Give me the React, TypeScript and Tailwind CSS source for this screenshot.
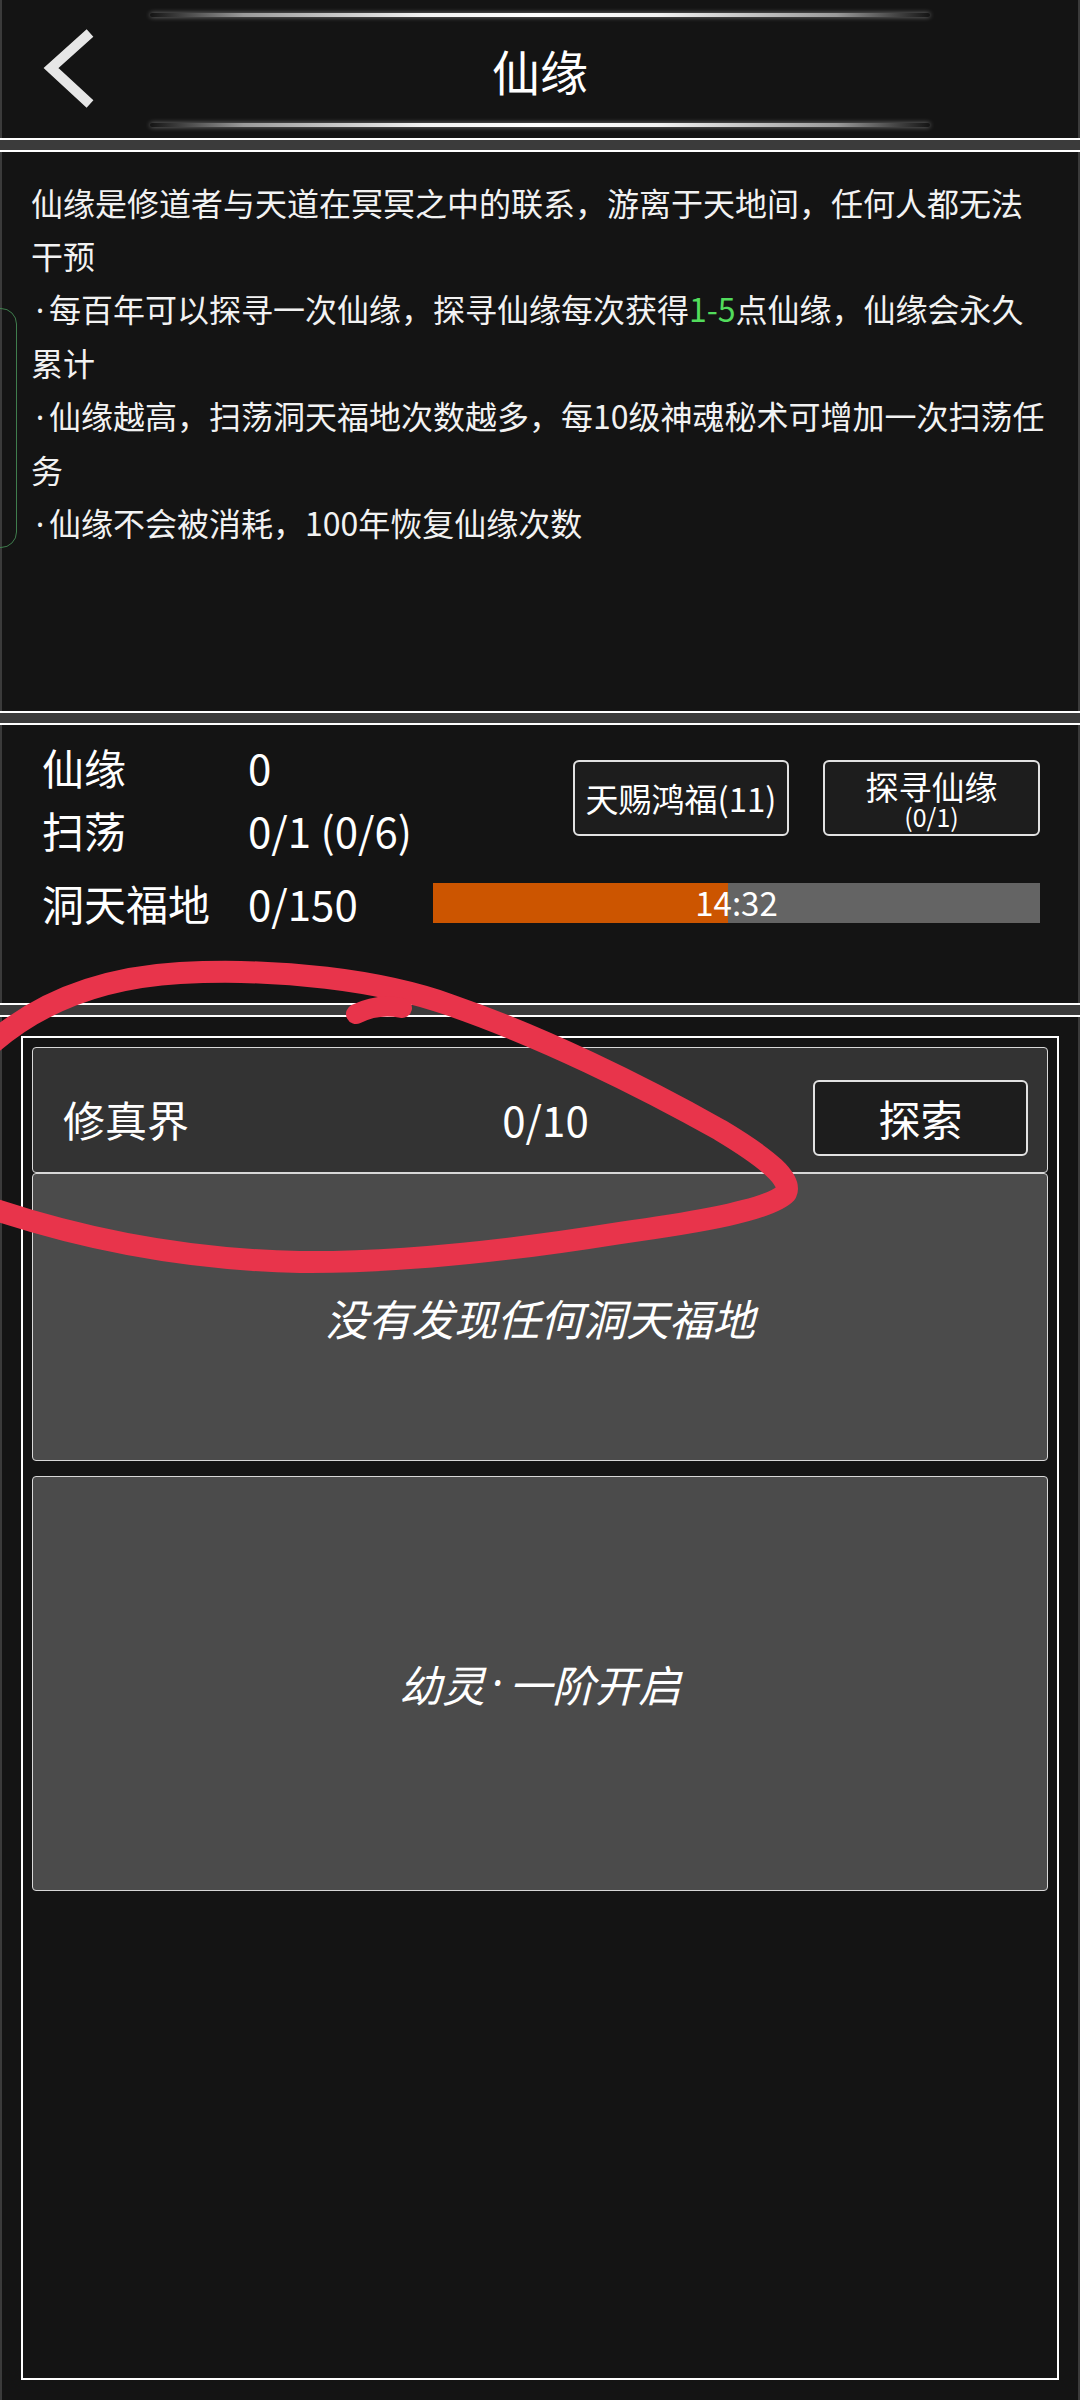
import type { ReactNode } from 'react'

const FONT = "font-['Noto_Sans_CJK_SC','Noto_Sans',sans-serif]"

// the CJK font draws U+00B7 full width; the reference shows a narrow Latin dot
function Dot() {
  return <span className="inline-block w-[0.56em] text-center font-['Noto_Sans',sans-serif]">·</span>
}

function GlowLine() {
  return (
    <div className="mx-auto h-[4px] w-[780px] rounded-full bg-[linear-gradient(90deg,transparent,#9a9a9a_12%,#f2f2f2_35%,#ffffff_50%,#f2f2f2_65%,#9a9a9a_88%,transparent)] shadow-[0_0_5px_rgba(255,255,255,0.45)]" />
  )
}

function Separator() {
  return <div className="h-[14px] shrink-0 border-y-2 border-white bg-[#3b3b3b]" />
}

function OutlineButton({ children, className = '' }: { children: ReactNode; className?: string }) {
  return (
    <button className={`flex flex-col items-center justify-center rounded-[6px] border-2 border-[#e2e2e2] bg-[#1d1d1d] text-white ${className}`}>
      {children}
    </button>
  )
}

function Header() {
  return (
    <div className="mx-[2px] flex h-[138px] shrink-0 flex-col bg-[#141414] pt-[13px] pb-[11px]">
      <GlowLine />
      <div className="grid flex-1 grid-cols-[1fr_auto_1fr] items-center">
        <svg width="70" height="90" viewBox="0 0 70 90" className="ml-[38px]">
          <path d="M50 8 L11 43 L50 79" fill="none" stroke="#e6e6e6" strokeWidth="10" />
        </svg>
        <h1 className="text-[48px] leading-none text-white">仙缘</h1>
        <div />
      </div>
      <GlowLine />
    </div>
  )
}

function Description() {
  return (
    <div className="relative mx-[2px] h-[559px] shrink-0 bg-[#141414] pt-[24px] pl-[29px]">
      <div className="w-[1016px] text-[32px] leading-[53px] text-[#f2f2f2]">
        <p>仙缘是修道者与天道在冥冥之中的联系，游离于天地间，任何人都无法干预</p>
        <p>
          <Dot />每百年可以探寻一次仙缘，探寻仙缘每次获得<span className="text-[#52dc5c]">1-5</span>点仙缘，仙缘会永久累计
        </p>
        <p>
          <Dot />仙缘越高，扫荡洞天福地次数越多，每10级神魂秘术可增加一次扫荡任务
        </p>
        <p>
          <Dot />仙缘不会被消耗，100年恢复仙缘次数
        </p>
      </div>
      {/* green side bracket */}
      <div className="absolute top-[156px] left-[-12px] h-[240px] w-[27px] rounded-r-[16px] border border-[#3f7d4d]" />
    </div>
  )
}

function Stats() {
  const done = 295
  const total = 607
  return (
    <div className="mx-[2px] h-[278px] shrink-0 bg-[#141414] pt-[10px] pr-[38px] pl-[40px] text-white">
      <div className="flex items-center justify-between">
        <div className="grid grid-cols-[206px_auto] text-[42px] leading-[63px]">
          <span>仙缘</span>
          <span>0</span>
          <span>扫荡</span>
          <span>0/1 (0/6)</span>
        </div>
        <div className="flex gap-[34px]">
          <OutlineButton className="h-[76px] w-[216px] text-[33px] leading-none">天赐鸿福(11)</OutlineButton>
          <OutlineButton className="h-[76px] w-[217px] pt-[2px]">
            <span className="text-[33px] leading-[34px]">探寻仙缘</span>
            <span className="text-[25px] leading-[26px]">(0/1)</span>
          </OutlineButton>
        </div>
      </div>
      <div className="mt-[10px] flex h-[63px] items-center text-[42px]">
        <span className="w-[206px]">洞天福地</span>
        <span className="w-[185px]">0/150</span>
        <div className="relative h-[40px] flex-1 bg-[#646464]">
          <div className="h-full bg-[#cc5500]" style={{ width: `${(done / total) * 100}%` }} />
          <span className="absolute inset-0 flex items-center justify-center text-[33px] leading-none text-white">14:32</span>
        </div>
      </div>
    </div>
  )
}

function Realms() {
  return (
    <div className="mx-[2px] flex-1 bg-[#141414] px-[19px] pt-[19px] pb-[20px]">
      <div className="h-full border-2 border-white p-[9px] text-white">
        <div className="grid h-[126px] grid-cols-[1fr_auto_1fr] items-center rounded-[4px] border border-[#d8d8d8] bg-[#333333] pt-[16px] pr-[19px] pl-[30px] text-[42px]">
          <span>修真界</span>
          <span>0/10</span>
          <OutlineButton className="h-[76px] w-[215px] justify-self-end text-[42px] leading-none">探索</OutlineButton>
        </div>
        <div className="flex h-[288px] items-center justify-center rounded-[4px] border border-[#d8d8d8] bg-[#4b4b4b] text-[43px] italic">
          没有发现任何洞天福地
        </div>
        <div className="mt-[15px] flex h-[415px] items-center justify-center rounded-[4px] border border-[#d8d8d8] bg-[#4b4b4b] text-[43px] italic">
          幼灵<Dot />一阶开启
        </div>
      </div>
    </div>
  )
}

function Scribble() {
  return (
    <svg className="pointer-events-none absolute top-0 left-0" width="1080" height="2400" viewBox="0 0 1080 2400">
      <g fill="none" stroke="#e8344b" strokeWidth="22" strokeLinecap="round" strokeLinejoin="round">
        <path d="M-10 1045 C 35 1005, 95 978, 180 973 C 280 968, 380 980, 450 1005 C 540 1036, 640 1085, 720 1130 C 770 1160, 792 1180, 786 1193 C 770 1210, 700 1222, 620 1233 C 520 1249, 400 1263, 300 1262 C 200 1260, 100 1245, -10 1208" />
        <path d="M356 1014 Q 378 1003, 402 1008" strokeWidth="20" />
      </g>
    </svg>
  )
}

export default function App() {
  return (
    <div className={`relative flex h-[2400px] w-[1080px] flex-col overflow-hidden bg-[#3b3b3b] ${FONT}`}>
      <Header />
      <Separator />
      <Description />
      <Separator />
      <Stats />
      <Separator />
      <Realms />
      <Scribble />
    </div>
  )
}
